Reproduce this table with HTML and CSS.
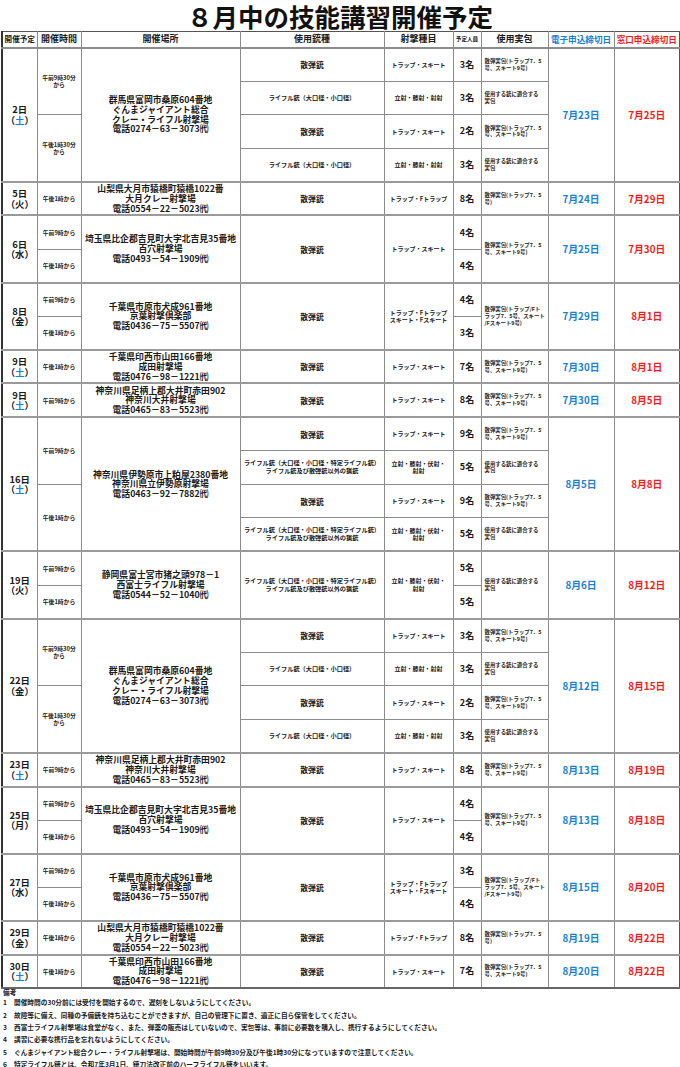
FILE: index.html
```html
<!DOCTYPE html>
<html lang="ja">
<head>
<meta charset="utf-8">
<title>８月中の技能講習開催予定</title>
<link rel="stylesheet" href="styles.css">
</head>
<body>
<h1 class="title">８月中の技能講習開催予定</h1>
<table class="sched">
<colgroup>
<col class="c1"><col class="c2"><col class="c3"><col class="c4"><col class="c5"><col class="c6"><col class="c7"><col class="c8"><col class="c9">
</colgroup>
<thead>
<tr class="hd">
<th class="h-s">開催予定</th><th>開催時間</th><th>開催場所</th><th>使用銃種</th><th>射撃種目</th><th class="h-xs">予定人員</th><th>使用実包</th><th class="h-e">電子申込締切日</th><th class="h-w">窓口申込締切日</th>
</tr>
</thead>
<tbody>
<tr>
<td class="d" rowspan="4">2日<br>（<span class="sat">土</span>）</td>
<td class="t" rowspan="2">午前9時30分<br>から</td>
<td class="v" rowspan="4">群馬県富岡市桑原604番地<br>ぐんまジャイアント総合<br>クレー・ライフル射撃場<br>電話0274－63－3073㈹</td>
<td class="g">散弾銃</td><td class="k">トラップ・スキート</td><td class="n">3名</td>
<td class="a">散弾実包(トラップ7．5<br>号、スキート9号)</td>
<td class="e" rowspan="4">7月23日</td><td class="w" rowspan="4">7月25日</td>
</tr>
<tr>
<td class="g s">ライフル銃（大口径・小口径）</td><td class="k">立射・膝射・射射</td><td class="n">3名</td>
<td class="a">使用する銃に適合する<br>実包</td>
</tr>
<tr>
<td class="t" rowspan="2">午後1時30分<br>から</td>
<td class="g">散弾銃</td><td class="k">トラップ・スキート</td><td class="n">2名</td>
<td class="a">散弾実包(トラップ7．5<br>号、スキート9号)</td>
</tr>
<tr>
<td class="g s">ライフル銃（大口径・小口径）</td><td class="k">立射・膝射・射射</td><td class="n">3名</td>
<td class="a">使用する銃に適合する<br>実包</td>
</tr>
</tbody>
<tbody>
<tr>
<td class="d">5日<br>（火）</td><td class="t">午後1時から</td>
<td class="v">山梨県大月市猿橋町猿橋1022番<br>大月クレー射撃場<br>電話0554－22－5023㈹</td>
<td class="g">散弾銃</td><td class="k">トラップ・Fトラップ</td><td class="n">8名</td>
<td class="a">散弾実包(トラップ7．5<br>号)</td>
<td class="e">7月24日</td><td class="w">7月29日</td>
</tr>
</tbody>
<tbody>
<tr>
<td class="d" rowspan="2">6日<br>（水）</td><td class="t">午前9時から</td>
<td class="v" rowspan="2">埼玉県比企郡吉見町大字北吉見35番地<br>百穴射撃場<br>電話0493－54－1909㈹</td>
<td class="g" rowspan="2">散弾銃</td><td class="k" rowspan="2">トラップ・スキート</td><td class="n">4名</td>
<td class="a" rowspan="2">散弾実包(トラップ7．5<br>号、スキート9号)</td>
<td class="e" rowspan="2">7月25日</td><td class="w" rowspan="2">7月30日</td>
</tr>
<tr><td class="t">午後1時から</td><td class="n">4名</td></tr>
</tbody>
<tbody>
<tr>
<td class="d" rowspan="2">8日<br>（金）</td><td class="t">午前9時から</td>
<td class="v" rowspan="2">千葉県市原市犬成961番地<br>京葉射撃倶楽部<br>電話0436－75－5507㈹</td>
<td class="g" rowspan="2">散弾銃</td><td class="k" rowspan="2">トラップ・Fトラップ<br>スキート・Fスキート</td><td class="n">4名</td>
<td class="a" rowspan="2">散弾実包(トラップ/Fト<br>ラップ7．5号、スキート<br>/Fスキート9号)</td>
<td class="e" rowspan="2">7月29日</td><td class="w" rowspan="2">8月1日</td>
</tr>
<tr><td class="t">午後1時から</td><td class="n">3名</td></tr>
</tbody>
<tbody>
<tr>
<td class="d">9日<br>（<span class="sat">土</span>）</td><td class="t">午後1時から</td>
<td class="v">千葉県印西市山田166番地<br>成田射撃場<br>電話0476－98－1221㈹</td>
<td class="g">散弾銃</td><td class="k">トラップ・スキート</td><td class="n">7名</td>
<td class="a">散弾実包(トラップ7．5<br>号、スキート9号)</td>
<td class="e">7月30日</td><td class="w">8月1日</td>
</tr>
</tbody>
<tbody>
<tr>
<td class="d">9日<br>（<span class="sat">土</span>）</td><td class="t">午前9時から</td>
<td class="v">神奈川県足柄上郡大井町赤田902<br>神奈川大井射撃場<br>電話0465－83－5523㈹</td>
<td class="g">散弾銃</td><td class="k">トラップ・スキート</td><td class="n">8名</td>
<td class="a">散弾実包(トラップ7．5<br>号、スキート9号)</td>
<td class="e">7月30日</td><td class="w">8月5日</td>
</tr>
</tbody>
<tbody>
<tr>
<td class="d" rowspan="4">16日<br>（<span class="sat">土</span>）</td>
<td class="t" rowspan="2">午前9時から</td>
<td class="v" rowspan="4">神奈川県伊勢原市上粕屋2380番地<br>神奈川県立伊勢原射撃場<br>電話0463－92－7882㈹</td>
<td class="g">散弾銃</td><td class="k">トラップ・スキート</td><td class="n">9名</td>
<td class="a">散弾実包(トラップ7．5<br>号、スキート9号)</td>
<td class="e" rowspan="4">8月5日</td><td class="w" rowspan="4">8月8日</td>
</tr>
<tr>
<td class="g s">ライフル銃（大口径・小口径・特定ライフル銃）<br>ライフル銃及び散弾銃以外の猟銃</td><td class="k">立射・膝射・伏射・<br>射射</td><td class="n">5名</td>
<td class="a">使用する銃に適合する<br>実包</td>
</tr>
<tr>
<td class="t" rowspan="2">午後1時から</td>
<td class="g">散弾銃</td><td class="k">トラップ・スキート</td><td class="n">9名</td>
<td class="a">散弾実包(トラップ7．5<br>号、スキート9号)</td>
</tr>
<tr>
<td class="g s">ライフル銃（大口径・小口径・特定ライフル銃）<br>ライフル銃及び散弾銃以外の猟銃</td><td class="k">立射・膝射・伏射・<br>射射</td><td class="n">5名</td>
<td class="a">使用する銃に適合する<br>実包</td>
</tr>
</tbody>
<tbody>
<tr>
<td class="d" rowspan="2">19日<br>（火）</td><td class="t">午前9時から</td>
<td class="v" rowspan="2">静岡県富士宮市猪之頭978－1<br>西富士ライフル射撃場<br>電話0544－52－1040㈹</td>
<td class="g s" rowspan="2">ライフル銃（大口径・小口径・特定ライフル銃）<br>ライフル銃及び散弾銃以外の猟銃</td><td class="k" rowspan="2">立射・膝射・伏射・<br>射射</td><td class="n">5名</td>
<td class="a" rowspan="2">使用する銃に適合する<br>実包</td>
<td class="e" rowspan="2">8月6日</td><td class="w" rowspan="2">8月12日</td>
</tr>
<tr><td class="t">午後1時から</td><td class="n">5名</td></tr>
</tbody>
<tbody>
<tr>
<td class="d" rowspan="4">22日<br>（金）</td>
<td class="t" rowspan="2">午前9時30分<br>から</td>
<td class="v" rowspan="4">群馬県富岡市桑原604番地<br>ぐんまジャイアント総合<br>クレー・ライフル射撃場<br>電話0274－63－3073㈹</td>
<td class="g">散弾銃</td><td class="k">トラップ・スキート</td><td class="n">3名</td>
<td class="a">散弾実包(トラップ7．5<br>号、スキート9号)</td>
<td class="e" rowspan="4">8月12日</td><td class="w" rowspan="4">8月15日</td>
</tr>
<tr>
<td class="g s">ライフル銃（大口径・小口径）</td><td class="k">立射・膝射・射射</td><td class="n">3名</td>
<td class="a">使用する銃に適合する<br>実包</td>
</tr>
<tr>
<td class="t" rowspan="2">午後1時30分<br>から</td>
<td class="g">散弾銃</td><td class="k">トラップ・スキート</td><td class="n">2名</td>
<td class="a">散弾実包(トラップ7．5<br>号、スキート9号)</td>
</tr>
<tr>
<td class="g s">ライフル銃（大口径・小口径）</td><td class="k">立射・膝射・射射</td><td class="n">3名</td>
<td class="a">使用する銃に適合する<br>実包</td>
</tr>
</tbody>
<tbody>
<tr>
<td class="d">23日<br>（<span class="sat">土</span>）</td><td class="t">午前9時から</td>
<td class="v">神奈川県足柄上郡大井町赤田902<br>神奈川大井射撃場<br>電話0465－83－5523㈹</td>
<td class="g">散弾銃</td><td class="k">トラップ・スキート</td><td class="n">8名</td>
<td class="a">散弾実包(トラップ7．5<br>号、スキート9号)</td>
<td class="e">8月13日</td><td class="w">8月19日</td>
</tr>
</tbody>
<tbody>
<tr>
<td class="d" rowspan="2">25日<br>（月）</td><td class="t">午前9時から</td>
<td class="v" rowspan="2">埼玉県比企郡吉見町大字北吉見35番地<br>百穴射撃場<br>電話0493－54－1909㈹</td>
<td class="g" rowspan="2">散弾銃</td><td class="k" rowspan="2">トラップ・スキート</td><td class="n">4名</td>
<td class="a" rowspan="2">散弾実包(トラップ7．5<br>号、スキート9号)</td>
<td class="e" rowspan="2">8月13日</td><td class="w" rowspan="2">8月18日</td>
</tr>
<tr><td class="t">午後1時から</td><td class="n">4名</td></tr>
</tbody>
<tbody>
<tr>
<td class="d" rowspan="2">27日<br>（水）</td><td class="t">午前9時から</td>
<td class="v" rowspan="2">千葉県市原市犬成961番地<br>京葉射撃倶楽部<br>電話0436－75－5507㈹</td>
<td class="g" rowspan="2">散弾銃</td><td class="k" rowspan="2">トラップ・Fトラップ<br>スキート・Fスキート</td><td class="n">3名</td>
<td class="a" rowspan="2">散弾実包(トラップ/Fト<br>ラップ7．5号、スキート<br>/Fスキート9号)</td>
<td class="e" rowspan="2">8月15日</td><td class="w" rowspan="2">8月20日</td>
</tr>
<tr><td class="t">午後1時から</td><td class="n">4名</td></tr>
</tbody>
<tbody>
<tr>
<td class="d">29日<br>（金）</td><td class="t">午後1時から</td>
<td class="v">山梨県大月市猿橋町猿橋1022番<br>大月クレー射撃場<br>電話0554－22－5023㈹</td>
<td class="g">散弾銃</td><td class="k">トラップ・Fトラップ</td><td class="n">8名</td>
<td class="a">散弾実包(トラップ7．5<br>号)</td>
<td class="e">8月19日</td><td class="w">8月22日</td>
</tr>
</tbody>
<tbody>
<tr>
<td class="d">30日<br>（<span class="sat">土</span>）</td><td class="t">午後1時から</td>
<td class="v">千葉県印西市山田166番地<br>成田射撃場<br>電話0476－98－1221㈹</td>
<td class="g">散弾銃</td><td class="k">トラップ・スキート</td><td class="n">7名</td>
<td class="a">散弾実包(トラップ7．5<br>号、スキート9号)</td>
<td class="e">8月20日</td><td class="w">8月22日</td>
</tr>
</tbody>
</table>
<div class="notes">
<div class="notes-head">備考</div>
<ol class="notes-list">
<li><span class="num">1</span>開催時間の30分前には受付を開始するので、遅刻をしないようにしてください。</li>
<li><span class="num">2</span>故障等に備え、同種の予備銃を持ち込むことができますが、自己の管理下に置き、適正に自ら保管をしてください。</li>
<li><span class="num">3</span>西富士ライフル射撃場は食堂がなく、また、弾薬の販売はしていないので、実包等は、事前に必要数を購入し、携行するようにしてください。</li>
<li><span class="num">4</span>講習に必要な携行品を忘れないようにしてください。</li>
<li><span class="num">5</span>ぐんまジャイアント総合クレー・ライフル射撃場は、開始時間が午前9時30分及び午後1時30分になっていますので注意してください。</li>
<li><span class="num">6</span>特定ライフル銃とは、令和7年3月1日、銃刀法改正前のハーフライフル銃をいいます。</li>
</ol>
</div>
</body>
</html>
```

FILE: styles.css
```css
* { box-sizing: border-box; }
html, body {
  margin: 0;
  padding: 0;
  background: #fff;
}
body {
  font-family: "Noto Sans CJK JP", "Noto Sans", sans-serif;
  font-weight: 700;
  color: #1a1a1a;
  width: 680px;
}
.title {
  margin: 0;
  height: 31px;
  line-height: 31px;
  font-size: 25.5px;
  font-weight: 700;
  text-align: center;
  color: #111;
}
.sched {
  border-collapse: collapse;
  table-layout: fixed;
  width: 678px;
  margin-left: 1px;
  border-left: 2px solid #333;
  border-right: 2px solid #555;
  border-bottom: 2px solid #666;
}
.c1 { width: 35px; }
.c2 { width: 44px; }
.c3 { width: 159px; }
.c4 { width: 144px; }
.c5 { width: 69px; }
.c6 { width: 28px; }
.c7 { width: 67px; }
.c8 { width: 66px; }
.c9 { width: 66px; }
.sched th, .sched td {
  border: 1px solid #8c8c8c;
  padding: 0;
  text-align: center;
  vertical-align: middle;
  white-space: nowrap;
  overflow: hidden;
}
.hd th {
  height: 16px;
  font-size: 9px;
  line-height: 10px;
  font-weight: 700;
  border-top: 1px solid #555;
  border-bottom: 2px solid #8c8c8c;
}
.hd .h-s { font-size: 7.6px; }
.hd .h-xs { font-size: 5.6px; }
.hd .h-e { color: #1b7fd3; font-size: 8.6px; }
.hd .h-w { color: #f31d1d; font-size: 8.6px; }
.sched tbody { border-top: 2px solid #9a9a9a; }
.sched tbody tr { height: 33.6px; }
.d {
  font-size: 9.4px;
  line-height: 10.5px;
}
.sat { color: #1b7fd3; }
.t {
  font-size: 5.8px;
  line-height: 7.4px;
}
.v {
  font-size: 8.8px;
  line-height: 9.8px;
}
.g { font-size: 7.8px; line-height: 9px; }
.g.s { font-size: 6.2px; line-height: 8px; }
.k {
  font-size: 6px;
  line-height: 7.6px;
}
.n { font-size: 9px; line-height: 10px; }
.a {
  text-align: left !important;
  font-size: 5.4px;
  line-height: 6.9px;
  padding-left: 3px !important;
}
.e, .w {
  font-size: 9.8px;
  line-height: 10px;
}
.e { color: #1b7fd3; }
.w { color: #f31d1d; }
.notes {
  padding: 0 0 0 3px;
  font-size: 6.7px;
  color: #1a1a1a;
}
.notes-head { line-height: 7px; height: 7px; }
.notes-list {
  list-style: none;
  margin: 0;
  padding: 0;
  line-height: 12.4px;
}
.notes-list li { white-space: nowrap; height: 12.4px; }
.num {
  display: inline-block;
  width: 11px;
}
```
